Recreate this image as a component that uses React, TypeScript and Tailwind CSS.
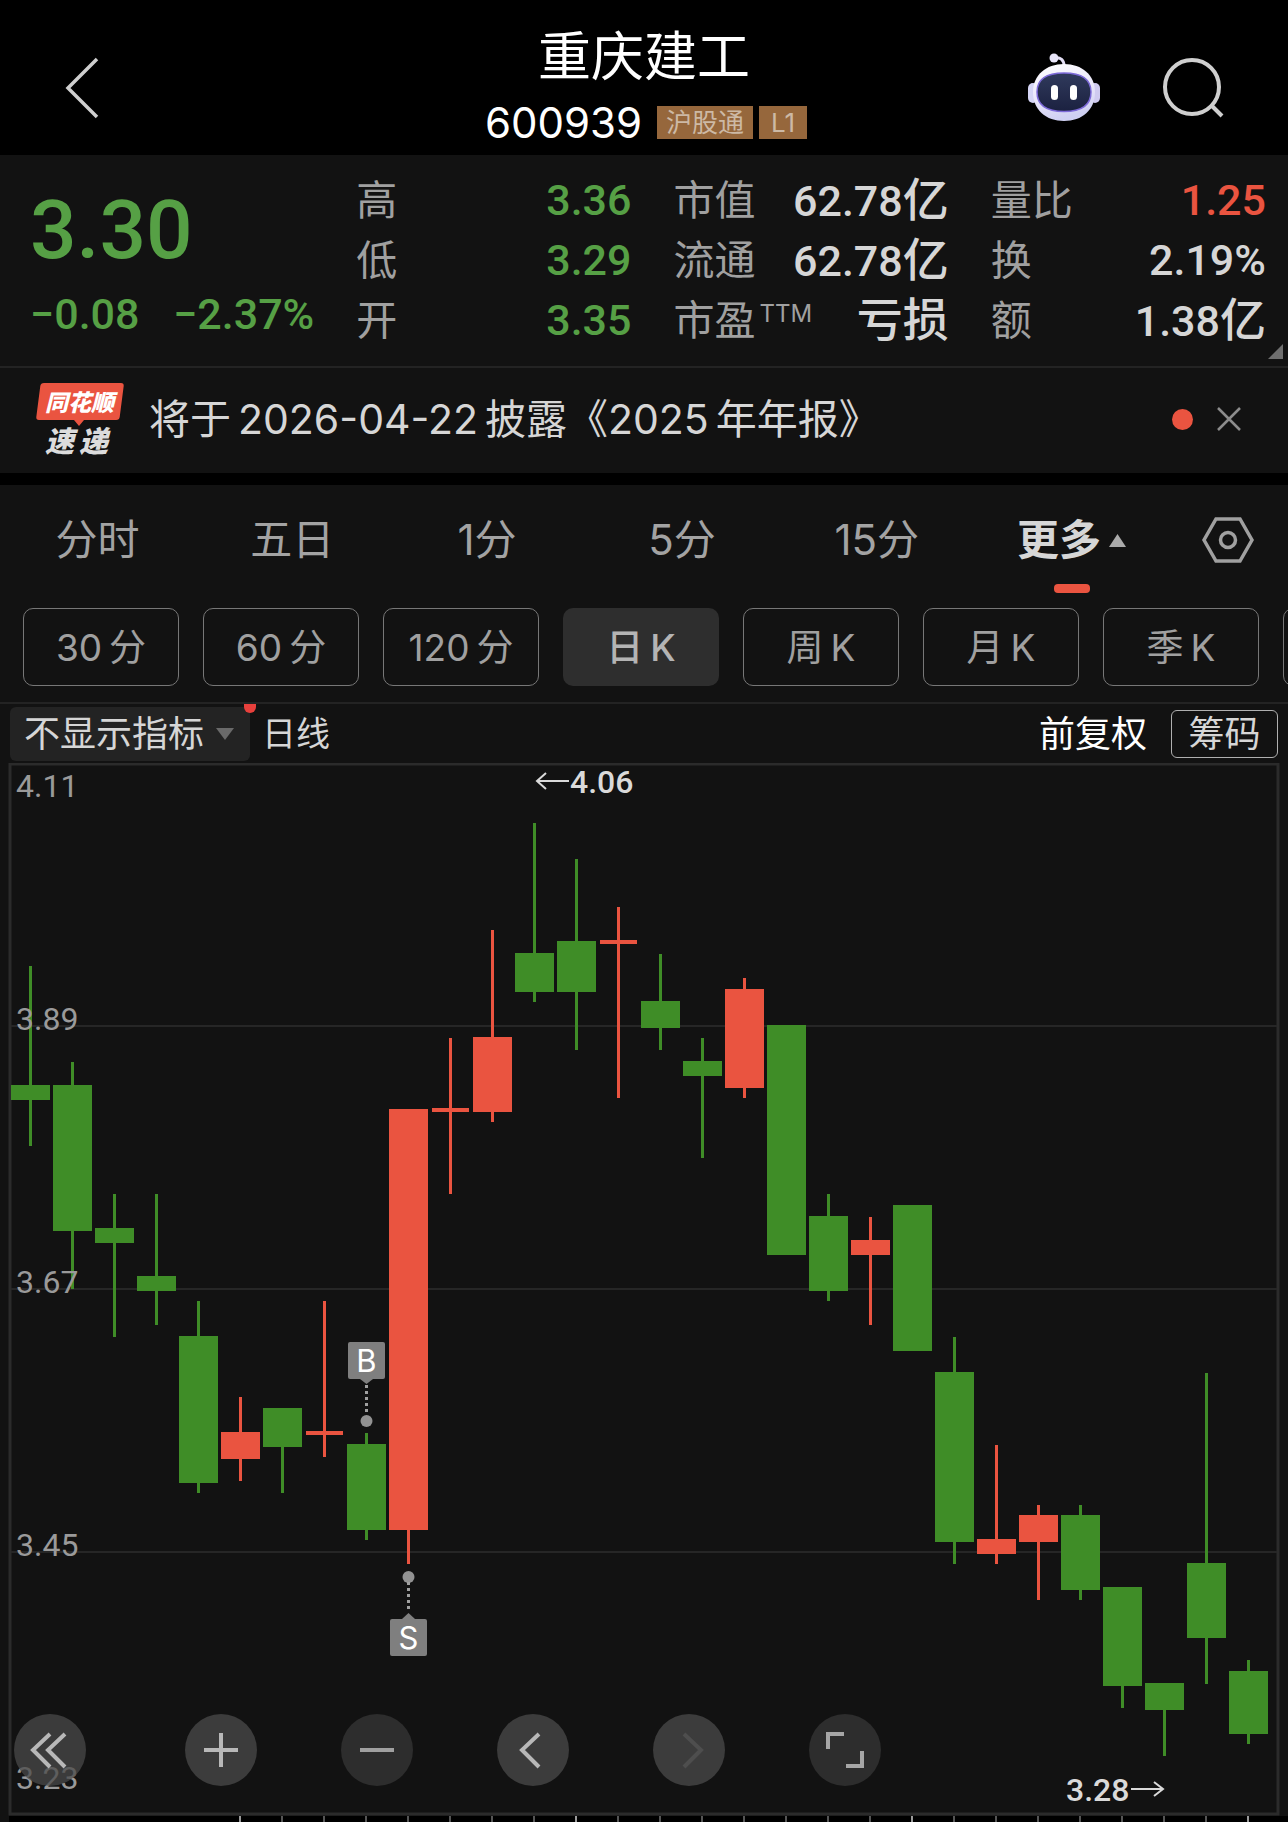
import React from "react";

const CJK = "font-[Inter,'Noto_Sans_CJK_SC',sans-serif]";
const NUM = "font-[Roboto,'Noto_Sans_CJK_SC',sans-serif]";

const GREEN = "#3f8d27";
const RED = "#ea5440";

type Candle = [open: number, close: number, high: number, low: number];

const candles: Candle[] = [
  [3.84, 3.83, 3.94, 3.79],
  [3.84, 3.72, 3.86, 3.67],
  [3.72, 3.71, 3.75, 3.63],
  [3.68, 3.67, 3.75, 3.64],
  [3.63, 3.51, 3.66, 3.5],
  [3.53, 3.55, 3.58, 3.51],
  [3.57, 3.54, 3.57, 3.5],
  [3.55, 3.55, 3.66, 3.53],
  [3.54, 3.47, 3.55, 3.46],
  [3.47, 3.82, 3.82, 3.44],
  [3.82, 3.82, 3.88, 3.75],
  [3.82, 3.88, 3.97, 3.81],
  [3.95, 3.92, 4.06, 3.91],
  [3.96, 3.92, 4.03, 3.87],
  [3.96, 3.96, 3.99, 3.83],
  [3.91, 3.89, 3.95, 3.87],
  [3.86, 3.85, 3.88, 3.78],
  [3.84, 3.92, 3.93, 3.83],
  [3.89, 3.7, 3.89, 3.7],
  [3.73, 3.67, 3.75, 3.66],
  [3.7, 3.71, 3.73, 3.64],
  [3.74, 3.62, 3.74, 3.62],
  [3.6, 3.46, 3.63, 3.44],
  [3.45, 3.46, 3.54, 3.44],
  [3.46, 3.48, 3.49, 3.41],
  [3.48, 3.42, 3.49, 3.41],
  [3.42, 3.34, 3.42, 3.32],
  [3.34, 3.32, 3.34, 3.28],
  [3.44, 3.38, 3.6, 3.34],
  [3.35, 3.3, 3.36, 3.29],
];

const yOf = (price: number) => Math.round((4.11 - price) * 1196);
const xOf = (i: number) => 31 + i * 42;

function CandleShape({ c, i }: { c: Candle; i: number }) {
  const [open, close, high, low] = c;
  const color = close >= open ? RED : GREEN;
  const x = xOf(i);
  const top = yOf(Math.max(open, close));
  const bottom = yOf(Math.min(open, close));
  const flat = open === close;
  return (
    <g fill={color}>
      <rect x={x - 2} y={yOf(high)} width={3} height={yOf(low) - yOf(high)} />
      <rect x={flat ? x - 19 : x - 20} y={top - (flat ? 2 : 1)} width={flat ? 37 : 39} height={flat ? 4 : bottom - top + 3} />
    </g>
  );
}

const axis: [string, number][] = [
  ["4.11", 34],
  ["3.89", 267],
  ["3.67", 530],
  ["3.45", 793],
  ["3.23", 1026],
];

function Chart() {
  return (
    <svg viewBox="0 0 1288 1059" className="block h-auto w-full" role="img" aria-label="日K线图">
      <rect x="9" y="1053" width="1279" height="6" fill="#000" />
      {candles.map((_, i) =>
        i >= 5 ? (
          <rect key={i} x={xOf(i) - 2} y="1053" width="2" height="6" fill={i % 8 === 5 ? "#9a9a9a" : "#555"} />
        ) : null,
      )}
      <rect x="10" y="1" width="1268" height="1050" fill="none" stroke="#2b2b2b" strokeWidth="3" />
      {[263, 526, 789].map((y) => (
        <rect key={y} x="11" y={y - 1} width="1266" height="2" fill="#262626" />
      ))}
      {candles.map((c, i) => (
        <CandleShape key={i} c={c} i={i} />
      ))}
      <g fill="#9a9a9a" fontFamily="Roboto, sans-serif" fontSize="32">
        {axis.map(([t, y]) => (
          <text key={t} x="16" y={y}>
            {t}
          </text>
        ))}
      </g>
      <g fill="#dadada" fontFamily="Roboto, sans-serif" fontSize="32" fontWeight="500">
        <text x="570" y="30">4.06</text>
        <text x="1066" y="1038">3.28</text>
      </g>
      <g fill="none" stroke="#dadada" strokeWidth="2">
        <path d="M569 18H537M546 10l-9 8 9 8" />
        <path d="M1131 1026h32M1154 1019l9 7-9 7" />
      </g>
      <g fill="#7f7f7f">
        <rect x="348" y="579" width="37" height="37" rx="2" />
        <path d="M360 616h13l-6.500 5z" />
        <circle cx="366.500" cy="658" r="6" fill="#929292" />
        <rect x="390" y="856" width="37" height="37" rx="2" />
        <path d="M402 856h13l-6.500 -6z" />
        <circle cx="408.500" cy="814" r="6" fill="#929292" />
      </g>
      <g stroke="#a0a0a0" strokeWidth="3" strokeDasharray="3 3">
        <path d="M366.500 622V650" />
        <path d="M408.500 819V848" />
      </g>
      <g fill="#fff" fontFamily="Inter, sans-serif" fontSize="31" textAnchor="middle">
        <text x="366.500" y="609">B</text>
        <text x="408.500" y="886">S</text>
      </g>
    </svg>
  );
}

function Robot() {
  return (
    <svg width="74" height="68" viewBox="0 0 74 68" aria-hidden="true">
      <defs>
        <linearGradient id="shell" x1="0" y1="0" x2="0.3" y2="1">
          <stop offset="0" stopColor="#fff" />
          <stop offset="0.6" stopColor="#e9e6fa" />
          <stop offset="1" stopColor="#cfd0f2" />
        </linearGradient>
        <linearGradient id="face" x1="0" y1="0" x2="0" y2="1">
          <stop offset="0" stopColor="#303a5c" />
          <stop offset="1" stopColor="#1b2140" />
        </linearGradient>
      </defs>
      <path d="M28 5c7-1 10 2 10 8" fill="none" stroke="#e4dff6" strokeWidth="3" />
      <circle cx="28" cy="5" r="4.500" fill="#e9e6fa" />
      <rect x="2" y="30" width="10" height="20" rx="5" fill="#d5d5f5" />
      <rect x="64" y="30" width="10" height="20" rx="5" fill="#cfcaf0" />
      <path d="M38 11c18 0 31 11 31 28 0 18-13 29-31 29S7 57 7 39c0-17 13-28 31-28z" fill="url(#shell)" />
      <path d="M38 20c18 0 27 6 27 19s-9 19.500-27 19.500S11 52 11 39s9-19 27-19z" fill="url(#face)" stroke="#7d6ad8" strokeWidth="1.500" />
      <rect x="25" y="32" width="7" height="15" rx="3.500" fill="#fff" />
      <rect x="44" y="32" width="7" height="15" rx="3.500" fill="#fff" />
    </svg>
  );
}

function Row({ label, sup, value, unit, tone }: { label: string; sup?: string; value: string; unit?: string; tone?: string }) {
  return (
    <div className="flex h-[60px] items-center justify-between whitespace-nowrap">
      <dt className="flex items-center text-[41px] text-[#a0a0a0]">
        {label}
        {sup && <sup className="top-0 mb-3 ml-1 text-[24px] leading-none">{sup}</sup>}
      </dt>
      <dd className={`${NUM} flex items-baseline text-[43px] font-medium ${tone ?? "text-[#d6d6d6]"}`}>
        {value}
        {unit && <span className="text-[46px]">{unit}</span>}
      </dd>
    </div>
  );
}

const tabs = ["分时", "五日", "1分", "5分", "15分"];
const periods: [string, string][] = [
  ["30", "分"],
  ["60", "分"],
  ["120", "分"],
  ["日", "K"],
  ["周", "K"],
  ["月", "K"],
  ["季", "K"],
];

const tools: { name: string; path: string; bg: string; stroke: string }[] = [
  { name: "最左", path: "M36 20L19 36l17 17M51 20L34 36l17 17", bg: "bg-[#4a4a4a]/75 mr-[15px]", stroke: "#b8b8b8" },
  { name: "放大", path: "M19 36h34M36 19v34", bg: "bg-[#3c3c3c]", stroke: "#b8b8b8" },
  { name: "缩小", path: "M19 36h34", bg: "bg-[#2d2d2d]", stroke: "#a0a0a0" },
  { name: "向左", path: "M42 20L25 36l17 17", bg: "bg-[#3c3c3c]", stroke: "#b8b8b8" },
  { name: "向右", path: "M31 20l17 16-17 17", bg: "bg-[#3c3c3c]", stroke: "#4e4e4e" },
  { name: "全屏", path: "M19 35V20h16M53 37v15H37", bg: "bg-[#2d2d2d]", stroke: "#a6a6a6" },
];

export default function App() {
  return (
    <div className={`${CJK} w-full overflow-hidden bg-[#121212] leading-none text-[#d6d6d6]`}>
      <header className="relative flex h-[155px] items-center justify-between bg-black pl-[64px] pr-[64px]">
        <button aria-label="返回" className="mt-5">
          <svg width="36" height="62" viewBox="0 0 36 62" fill="none" stroke="#cfcfcf" strokeWidth="3.500">
            <path d="M33 2L4 31l29 29" />
          </svg>
        </button>
        <div className="absolute inset-x-0 top-0 flex flex-col items-center text-white">
          <h1 className="mt-[27px] text-[53px] leading-[60px]">重庆建工</h1>
          <div className="mt-3 flex items-center pl-1">
            <span className="text-[42px] leading-[47px]">600939</span>
            <span className="ml-[15px] flex h-[33px] items-center bg-[#96673c] px-[9px] text-[26px] text-[#cdb9a5]">沪股通</span>
            <span className="ml-1.5 flex h-[33px] w-12 items-center justify-center bg-[#96673c] text-[26px] text-[#cdb9a5]">L1</span>
          </div>
        </div>
        <div className="relative mt-[18px] flex items-center gap-[62px]">
          <button aria-label="智能助手">
            <Robot />
          </button>
          <button aria-label="搜索">
            <svg width="62" height="62" viewBox="0 0 62 62" fill="none" stroke="#cfcfcf" strokeWidth="4">
              <circle cx="30" cy="31" r="27" />
              <path d="M49 49l11 11" />
            </svg>
          </button>
        </div>
      </header>

      <section className="relative grid h-[211px] grid-cols-[284fr_275fr_275fr_275fr] gap-x-[42px] pl-[30px] pr-[22px] pt-[15px]">
        <div className={`${NUM} whitespace-nowrap font-medium text-[#56a045]`}>
          <div className="mt-4 text-[82px] leading-[88px]">3.30</div>
          <div className="mt-2.5 flex justify-between text-[43px] leading-[60px]">
            <span>−0.08</span>
            <span>−2.37%</span>
          </div>
        </div>
        <dl>
          <Row label="高" value="3.36" tone="text-[#56a045]" />
          <Row label="低" value="3.29" tone="text-[#56a045]" />
          <Row label="开" value="3.35" tone="text-[#56a045]" />
        </dl>
        <dl>
          <Row label="市值" value="62.78" unit="亿" />
          <Row label="流通" value="62.78" unit="亿" />
          <Row label="市盈" sup="TTM" value="" unit="亏损" />
        </dl>
        <dl>
          <Row label="量比" value="1.25" tone="text-[#ea5440]" />
          <Row label="换" value="2.19%" />
          <Row label="额" value="1.38" unit="亿" />
        </dl>
        <svg className="absolute bottom-[7px] right-[5px]" width="15" height="15" aria-hidden="true">
          <path d="M15 0v15H0z" fill="#6e6e6e" />
        </svg>
      </section>

      <section className="flex h-[107px] items-center border-t-2 border-[#232323] pb-[3px] pl-9 pr-[47px]">
        <svg width="88" height="74" viewBox="0 0 88 74" className="overflow-visible" role="img" aria-label="同花顺速递">
          <path d="M8 1h77q3 0 2.700 3l-4 31q-.4 3-3.400 3H48l-5 6-5-6H3q-3 0-2.700-3l4-31Q4.700 1 8 1z" fill={RED} />
          <g fontFamily="'Noto Sans CJK SC', sans-serif" fontWeight="900" fontStyle="italic">
            <text x="9" y="29" fontSize="23" fill="#fff">同花顺</text>
            <text x="9" y="70" fontSize="29" fill="#dcdcdc">速</text>
            <text x="43" y="70" fontSize="29" fill="#dcdcdc">递</text>
          </g>
        </svg>
        <p className="ml-[25px] flex-1 whitespace-nowrap text-[41px]">
          将于<span className="mx-[7px]">2026-04-22</span>披露《2025<span className="ml-[7px]">年年报》</span>
        </p>
        <span className="size-[21px] rounded-full bg-[#ea5440]" />
        <button aria-label="关闭" className="ml-6">
          <svg width="24" height="24" viewBox="0 0 24 24" fill="none" stroke="#8c8c8c" strokeWidth="2.500">
            <path d="M1 1l22 22M23 1L1 23" />
          </svg>
        </button>
      </section>
      <div className="h-3 bg-black" />

      <nav className="flex h-[110px] text-[42px] text-[#a3a3a3]">
        {tabs.map((t) => (
          <button key={t} className="flex-1">
            {t}
          </button>
        ))}
        <button className="relative flex flex-1 items-center justify-center gap-2 font-bold text-[#d6d6d6]">
          更多
          <svg width="17" height="13" aria-hidden="true">
            <path d="M8.500 0L17 13H0z" fill="#aaa" />
          </svg>
          <span className="absolute bottom-0.5 left-1/2 h-[9px] w-9 -translate-x-1/2 rounded-[4px] bg-[#ea5440]" />
        </button>
        <button aria-label="设置" className="flex w-[119px] items-center justify-center">
          <svg width="52" height="46" viewBox="0 0 52 46" fill="none" stroke="#a0a0a0" strokeWidth="3.500">
            <path d="M14 2h24l12 21-12 21H14L2 23z" />
            <circle cx="26" cy="23" r="7.500" />
          </svg>
        </button>
      </nav>

      <div className="flex gap-6 overflow-hidden pb-4 pl-[23px] pt-[13px]">
        {periods.map(([a, b]) => (
          <button
            key={a}
            className={
              a === "日"
                ? "flex h-[78px] w-[156px] shrink-0 items-center justify-center gap-[7px] rounded-[10px] bg-[#2e2e2e] text-[37px] font-medium text-[#b4b4b4]"
                : "flex h-[78px] w-[156px] shrink-0 items-center justify-center gap-[7px] rounded-[10px] border border-[#777] text-[37px] text-[#a0a0a0]"
            }
          >
            <span>{a}</span>
            <span>{b}</span>
          </button>
        ))}
        <button aria-label="更多周期" className="h-[78px] w-[156px] shrink-0 rounded-[10px] border border-[#777]" />
      </div>

      <div className="flex h-[61px] items-center border-t-2 border-[#232323] pl-[10px] pr-[10px] text-[36px]">
        <button className="relative flex h-[54px] items-center rounded-[6px] bg-[#232323] pl-[14px] pr-4">
          不显示指标
          <svg className="ml-3" width="18" height="12" aria-hidden="true">
            <path d="M0 0h18L9 12z" fill="#6a6a6a" />
          </svg>
          <span className="absolute -right-1.5 -top-[3px] h-[9px] w-3 rounded-b-full bg-[#e8403c]" />
        </button>
        <span className="ml-3 text-[34px]">日线</span>
        <button className="ml-auto text-white">前复权</button>
        <button className="ml-6 flex h-12 w-[107px] items-center justify-center rounded-[6px] border border-[#b0b0b0]">
          筹码
        </button>
      </div>

      <div className="relative">
        <Chart />
        <div className="absolute bottom-9 left-[14px] flex gap-[84px]">
          {tools.map((t) => (
            <button key={t.name} aria-label={t.name} className={`size-[72px] rounded-full ${t.bg}`}>
              <svg width="72" height="72" viewBox="0 0 72 72" fill="none" stroke={t.stroke} strokeWidth="4">
                <path d={t.path} />
              </svg>
            </button>
          ))}
        </div>
      </div>
    </div>
  );
}
